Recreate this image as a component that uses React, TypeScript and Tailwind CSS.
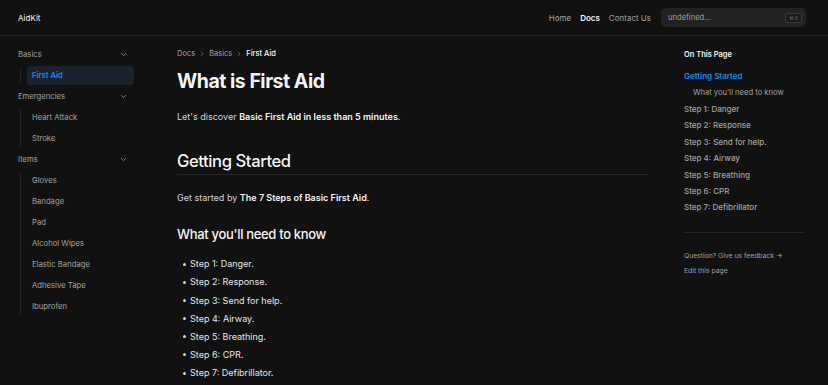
import React from "react";
import { ChevronDown, ChevronRight } from "lucide-react";

const sidebar = [
  { title: "Basics", items: ["First Aid"] },
  { title: "Emergencies", items: ["Heart Attack", "Stroke"] },
  {
    title: "Items",
    items: ["Gloves", "Bandage", "Pad", "Alcohol Wipes", "Elastic Bandage", "Adhesive Tape", "Ibuprofen"],
  },
];

const steps = ["Danger", "Response", "Send for help", "Airway", "Breathing", "CPR", "Defibrillator"];

const tocSteps = [
  "Step 1: Danger",
  "Step 2: Response",
  "Step 3: Send for help.",
  "Step 4: Airway",
  "Step 5: Breathing",
  "Step 6: CPR",
  "Step 7: Defibrillator",
];

const App: React.FC = () => {
  return (
    <div className="min-h-[385px] bg-[#111111] text-neutral-300 font-['Inter',sans-serif] antialiased">
      {/* Top navbar */}
      <header className="h-[36px] flex items-center border-b border-[#262626] pl-[18px] pr-[22px]">
        <span className="text-[8px] text-neutral-100">AidKit</span>
        <nav className="ml-auto flex items-center gap-[9px] text-[8px]">
          <a className="text-neutral-400">Home</a>
          <a className="text-neutral-100 font-semibold">Docs</a>
          <a className="text-neutral-400">Contact Us</a>
        </nav>
        <div className="ml-[10px] w-[145px] h-[19px] rounded-[5px] bg-[#222222] flex items-center pl-[7px] pr-[4px]">
          <span className="text-[7.6px] text-neutral-400">undefined...</span>
          <kbd className="ml-auto h-[10px] px-[3px] rounded-[2px] border border-[#3a3a3a] bg-[#1a1a1a] text-[5px] leading-[8px] text-neutral-500 font-sans">
            ⌘ K
          </kbd>
        </div>
      </header>

      <div className="flex">
        {/* Sidebar */}
        <aside className="w-[145px] shrink-0 pl-[18px] pr-[11px] pt-[9px]">
          <ul className="flex flex-col gap-[2px]">
            {sidebar.map((group) => (
              <li key={group.title} className="flex flex-col gap-[2px]">
                <div className="h-[19px] flex items-center pr-[6px] text-[7.7px] text-neutral-400">
                  <span>{group.title}</span>
                  <ChevronDown size={9} strokeWidth={2} className="ml-auto text-neutral-400" />
                </div>
                <ul className="relative ml-[2px] pl-[7px] flex flex-col gap-[2px] before:absolute before:left-0 before:top-[2px] before:bottom-[2px] before:w-px before:bg-[#262626]">
                  {group.items.map((item) => {
                    const active = item === "First Aid";
                    return (
                      <li
                        key={item}
                        className={
                          active
                            ? "h-[19px] flex items-center px-[5px] rounded-[3px] bg-[#1a222d] text-[7.7px] font-semibold text-[#1e88e5]"
                            : "h-[19px] flex items-center px-[5px] text-[7.7px] text-neutral-400"
                        }
                      >
                        {item}
                      </li>
                    );
                  })}
                </ul>
              </li>
            ))}
          </ul>
        </aside>

        {/* Main content */}
        <main className="w-[503px] shrink-0 pl-[32px]">
          <div className="w-[471px]">
            <div className="mt-[12px] h-[12px] flex items-center gap-[3px] text-[7.5px] text-neutral-400">
              <span>Docs</span>
              <ChevronRight size={8} className="text-neutral-500" />
              <span>Basics</span>
              <ChevronRight size={8} className="text-neutral-500" />
              <span className="text-neutral-100 font-medium">First Aid</span>
            </div>
            <h1 className="mt-[8px] text-[19.5px] leading-[26px] font-bold tracking-tight text-neutral-100">
              What is First Aid
            </h1>
            <p className="mt-[16px] text-[9px] leading-[14px] text-neutral-300">
              Let's discover <strong className="font-semibold text-neutral-100">Basic First Aid in less than 5 minutes</strong>.
            </p>
            <h2 className="mt-[26px] pb-[2px] border-b border-[#262626] text-[16.6px] leading-[22px] font-medium tracking-tight text-neutral-100">
              Getting Started
            </h2>
            <p className="mt-[16px] text-[9px] leading-[14px] text-neutral-300">
              Get started by <strong className="font-semibold text-neutral-100">The 7 Steps of Basic First Aid</strong>.
            </p>
            <h3 className="mt-[20px] text-[13px] leading-[18px] font-medium tracking-tight text-neutral-100">
              What you'll need to know
            </h3>
            <ul className="mt-[14px] flex flex-col gap-[4.2px] pl-[6px]">
              {steps.map((s, i) => (
                <li key={s} className="h-[14px] flex items-center gap-[4px] text-[9px] text-neutral-200">
                  <span className="w-[3px] h-[3px] rounded-full bg-neutral-300" />
                  <span>
                    Step {i + 1}: {s}.
                  </span>
                </li>
              ))}
            </ul>
          </div>
        </main>

        {/* On this page */}
        <nav className="ml-[36px] w-[120px] shrink-0 pt-[13px]">
          <p className="h-[12px] flex items-center text-[7.5px] font-semibold text-neutral-100">On This Page</p>
          <ul className="mt-[7px] flex flex-col text-[8px] font-medium">
            <li className="h-[16.4px] flex items-center text-[#1e88e5] font-semibold">Getting Started</li>
            <li className="h-[16.4px] flex items-center pl-[9px] text-[7.6px] text-neutral-400 font-normal">
              What you'll need to know
            </li>
            {tocSteps.map((t) => (
              <li key={t} className="h-[16.4px] flex items-center text-neutral-400">
                {t}
              </li>
            ))}
          </ul>
          <div className="mt-[16px] border-t border-[#262626] pt-[18px] flex flex-col gap-[5px] text-[6.8px] text-neutral-400">
            <span>Question? Give us feedback →</span>
            <span>Edit this page</span>
          </div>
        </nav>
      </div>
    </div>
  );
};

export default App;
